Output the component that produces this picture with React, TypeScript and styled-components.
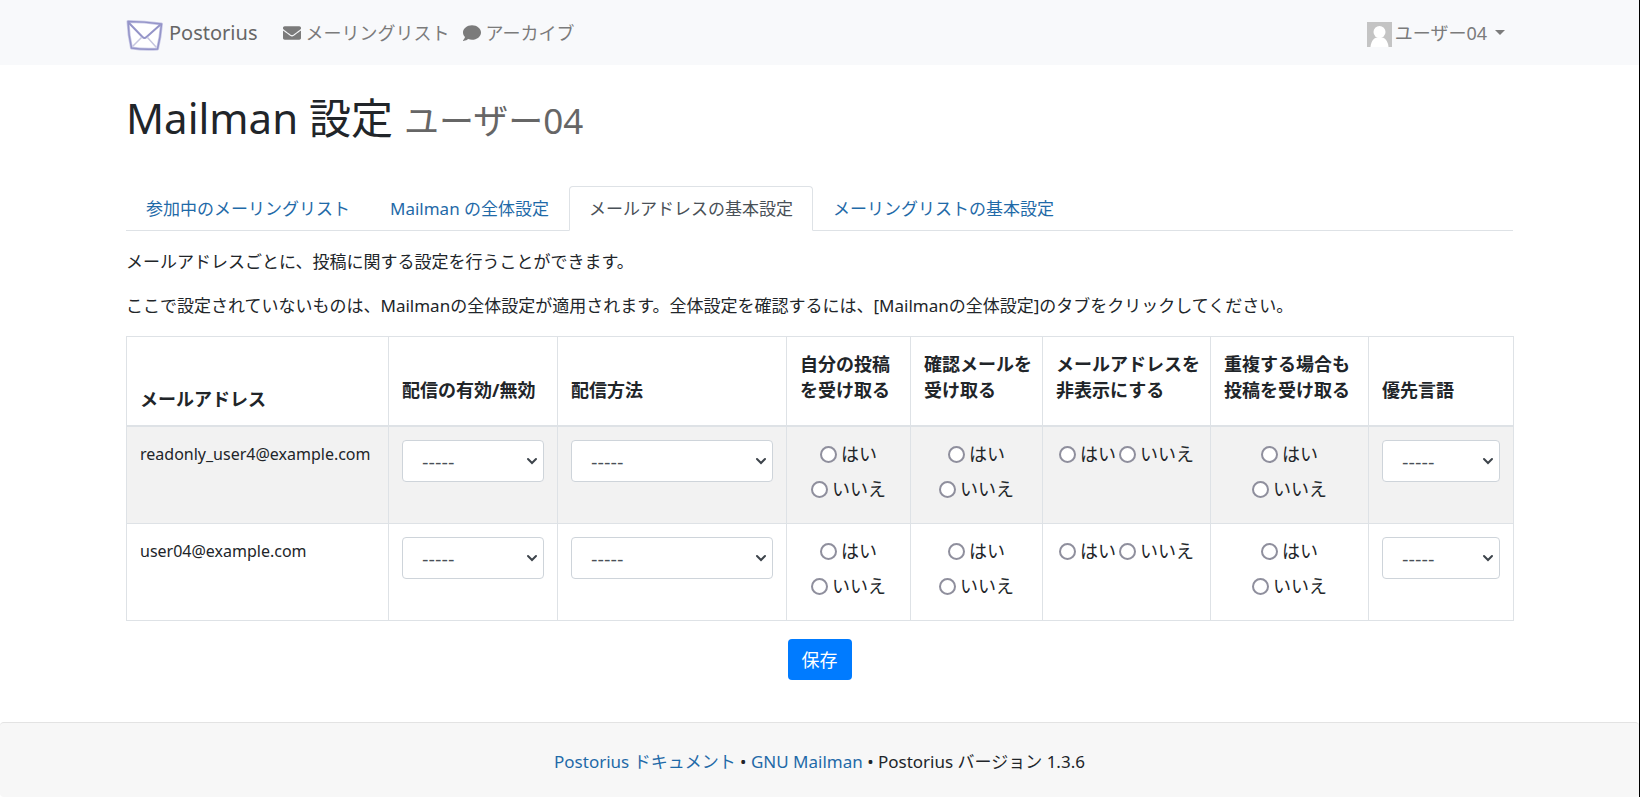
import React, { useId } from 'react';
import styled, { createGlobalStyle, css } from 'styled-components';
import { FaEnvelope, FaComment } from 'react-icons/fa';

const GlobalStyle = createGlobalStyle`
  *, *::before, *::after { box-sizing: border-box; }
  html { background: #fff; }
  body {
    margin: 0;
    color: #212529;
    font: 17px/26px "Noto Sans", "Noto Sans CJK JP", sans-serif;
  }
`;

const Page = styled.div`
  display: flex;
  flex-direction: column;
  min-height: 100vh;
  border-right: 1px solid #000;
`;

const Container = styled.div`
  width: 100%;
  max-width: 1387px;
  margin: 0 auto;
`;

const Navbar = styled.header`
  background: #f8f9fb;
`;

const NavInner = styled(Container)`
  display: flex;
  align-items: center;
  height: 65px;
`;

const Brand = styled.a`
  display: flex;
  align-items: center;
  gap: 6px;
  margin-right: 26px;
  color: #666;
  font-size: 20px;
  text-decoration: none;
`;

const NavLink = styled.a`
  display: flex;
  align-items: center;
  gap: 4px;
  margin-right: 14px;
  color: #7b7b7b;
  font-size: 18px;
  text-decoration: none;
`;

const UserMenu = styled.button`
  display: flex;
  align-items: center;
  gap: 3px;
  margin-left: auto;
  padding: 0 8px;
  border: 0;
  background: none;
  color: #7b7b7b;
  font: inherit;
  font-size: 18px;
`;

const NavPicture = styled.svg`
  margin-top: 4px;
`;

const Caret = styled.span`
  margin-left: 5px;
  border: 5px solid transparent;
  border-top-color: currentColor;
  border-bottom: 0;
`;

const Title = styled.h1`
  margin: 26px 0 38px;
  font-size: 42px;
  font-weight: 400;
  line-height: 54px;
`;

const SubTitle = styled.small`
  color: #666;
  font-size: 35px;
`;

const Tabs = styled.nav`
  display: flex;
  border-bottom: 1px solid #dee2e6;
`;

const Tab = styled.a<{ $active?: boolean }>`
  margin-bottom: -1px;
  padding: 9px 19px 8px;
  border: 1px solid transparent;
  border-radius: 4px 4px 0 0;
  color: #1f6aa8;
  text-decoration: none;
  ${(p) =>
    p.$active &&
    css`
      border-color: #dee2e6 #dee2e6 #fff;
      background: #fff;
      color: #495057;
    `}
`;

const Lead = styled.p`
  margin: 18px 0 17px;
`;

const Grid = styled.table`
  width: 100%;
  table-layout: fixed;
  border-collapse: collapse;
  border: 1px solid #dee2e6;
`;

const Th = styled.th`
  padding: 14px 13px 13px;
  border: 1px solid #dee2e6;
  border-bottom-width: 2px;
  font-size: 18px;
  text-align: left;
  vertical-align: bottom;
  white-space: nowrap;
`;

const HeadText = styled.span`
  display: block;
  margin-bottom: 9px;
`;

const Row = styled.tr`
  &:nth-child(odd) { background: #f2f2f2; }
`;

const Td = styled.td`
  padding: 13px;
  border: 1px solid #dee2e6;
  font-size: 16px;
  line-height: 28px;
  vertical-align: top;
`;

const SelectWrap = styled.div`
  position: relative;
`;

const Select = styled.select`
  display: block;
  width: 100%;
  height: 42px;
  padding: 0 19px;
  appearance: none;
  border: 1px solid #ced4da;
  border-radius: 4px;
  background: #fff;
  color: #495057;
  font: 18px "DejaVu Sans", sans-serif;
`;

const Chevron = styled.svg`
  position: absolute;
  top: 17px;
  right: 6px;
  pointer-events: none;
`;

const Choices = styled.div`
  display: flex;
  flex-wrap: wrap;
  justify-content: center;
  column-gap: 3px;
`;

const Choice = styled.label`
  display: flex;
  align-items: center;
  gap: 4px;
  margin-bottom: 7px;
  font-size: 18px;
  white-space: nowrap;
`;

const Radio = styled.input`
  width: 17px;
  height: 17px;
  margin: 0;
  appearance: none;
  border: 2px solid #8f8f9d;
  border-radius: 50%;
  background: #fff;

  &:checked {
    background: #007bff;
    box-shadow: inset 0 0 0 2px #fff;
  }
`;

const Actions = styled.div`
  display: flex;
  justify-content: center;
  padding: 18px 0 42px;
`;

const SaveButton = styled.button`
  height: 41px;
  padding: 0 14px;
  border: 0;
  border-radius: 4px;
  background: #007bff;
  color: #fff;
  font: inherit;
  font-size: 18px;
`;

const Footer = styled.footer`
  flex: 1;
  padding: 26px 0 22px;
  border: 1px solid #e3e3e3;
  border-width: 1px 0 0;
  border-radius: 4px;
  background: #f7f7f7;
  text-align: center;
`;

const FooterLink = styled.a`
  color: #1f6aa8;
  text-decoration: none;
`;

const Logo = () => (
  <NavPicture width="37" height="32" viewBox="0 0 37 32" fill="none" stroke="#9494c8" strokeLinecap="round" strokeLinejoin="round" aria-hidden="true">
    <path d="M2 2.500 Q18 2.500 35.500 5 Q34.500 18 31.500 30 Q18 31 5.500 29 Q2.500 16 2 2.500Z" fill="#fff" stroke="#c9c9e6" strokeWidth="3" />
    <path d="M2 2.500 Q18 2.500 35.500 5 Q34.500 18 31.500 30 Q18 31 5.500 29 Q2.500 16 2 2.500Z" strokeWidth="1.500" />
    <path d="M3 4 L16.500 18 Q18.500 20 20.500 18 L34 6" strokeWidth="2" />
    <path d="M7 27 L15.500 18.500 M30 28 L21.500 18.500" stroke="#c6c6df" strokeWidth="1.500" />
  </NavPicture>
);

const Avatar = () => (
  <NavPicture width="25" height="25" viewBox="0 0 25 25" aria-hidden="true">
    <rect width="25" height="25" fill="#c4c4c4" />
    <circle cx="12.500" cy="10" r="6" fill="#fff" />
    <path d="M3.500 25 C4 19 7 15 12.500 15 C18 15 21 19 21.500 25Z" fill="#fff" />
  </NavPicture>
);

const Dropdown = ({ label }: { label: string }) => (
  <SelectWrap>
    <Select aria-label={label}>
      <option>-----</option>
    </Select>
    <Chevron width="12" height="8" viewBox="0 0 12 8" fill="none" stroke="#3d444b" strokeWidth="2" strokeLinecap="round">
      <path d="M2 2 L6 6 L10 2" />
    </Chevron>
  </SelectWrap>
);

const YesNo = ({ label }: { label: string }) => {
  const name = useId();
  return (
    <Choices role="radiogroup" aria-label={label}>
      <Choice><Radio type="radio" name={name} value="yes" />はい</Choice>
      <Choice><Radio type="radio" name={name} value="no" />いいえ</Choice>
    </Choices>
  );
};

const columnWidths = [262, 169, 229, 124, 132, 168, 158, 145];

const headings = [
  ['配信の有効/無効'],
  ['配信方法'],
  ['自分の投稿', 'を受け取る'],
  ['確認メールを', '受け取る'],
  ['メールアドレスを', '非表示にする'],
  ['重複する場合も', '投稿を受け取る'],
  ['優先言語'],
];

const addresses = ['readonly_user4@example.com', 'user04@example.com'];

const tabs = [
  '参加中のメーリングリスト',
  'Mailman の全体設定',
  'メールアドレスの基本設定',
  'メーリングリストの基本設定',
];

export default function App() {
  return (
    <>
      <GlobalStyle />
      <Page>
        <Navbar>
          <NavInner>
            <Brand href="#"><Logo />Postorius</Brand>
            <NavLink href="#"><FaEnvelope size={18} />メーリングリスト</NavLink>
            <NavLink href="#"><FaComment size={18} />アーカイブ</NavLink>
            <UserMenu type="button"><Avatar />ユーザー04<Caret /></UserMenu>
          </NavInner>
        </Navbar>
        <Container as="main">
          <Title>Mailman 設定 <SubTitle>ユーザー04</SubTitle></Title>
          <Tabs>
            {tabs.map((tab, i) => (
              <Tab key={tab} href="#" $active={i === 2}>{tab}</Tab>
            ))}
          </Tabs>
          <Lead>メールアドレスごとに、投稿に関する設定を行うことができます。</Lead>
          <Lead>ここで設定されていないものは、Mailmanの全体設定が適用されます。全体設定を確認するには、[Mailmanの全体設定]のタブをクリックしてください。</Lead>
          <form onSubmit={(e) => e.preventDefault()}>
            <Grid>
              <colgroup>
                {columnWidths.map((w, i) => <col key={i} width={w} />)}
              </colgroup>
              <thead>
                <tr>
                  <Th scope="col">メールアドレス</Th>
                  {headings.map((lines) => (
                    <Th key={lines[0]} scope="col">
                      <HeadText>
                        {lines.map((line, i) => (
                          <React.Fragment key={line}>{i > 0 && <br />}{line}</React.Fragment>
                        ))}
                      </HeadText>
                    </Th>
                  ))}
                </tr>
              </thead>
              <tbody>
                {addresses.map((address) => (
                  <Row key={address}>
                    <Td>{address}</Td>
                    {headings.map((lines, i) => {
                      const label = `${address} ${lines.join('')}`;
                      return (
                        <Td key={label}>
                          {i >= 2 && i <= 5 ? <YesNo label={label} /> : <Dropdown label={label} />}
                        </Td>
                      );
                    })}
                  </Row>
                ))}
              </tbody>
            </Grid>
            <Actions><SaveButton type="submit">保存</SaveButton></Actions>
          </form>
        </Container>
        <Footer>
          <FooterLink href="#">Postorius ドキュメント</FooterLink> • <FooterLink href="#">GNU Mailman</FooterLink> • Postorius バージョン 1.3.6
        </Footer>
      </Page>
    </>
  );
}
